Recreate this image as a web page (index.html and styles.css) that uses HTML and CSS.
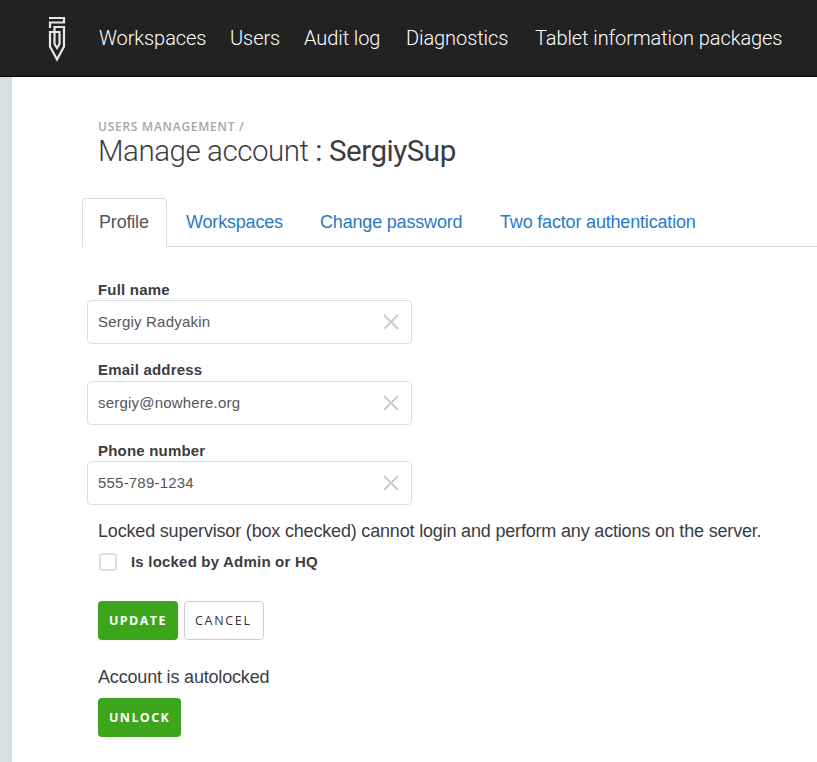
FILE: index.html
```html
<!DOCTYPE html>
<html lang="en">
<head>
<meta charset="utf-8">
<title>Manage account</title>
<link rel="stylesheet" href="styles.css">
</head>
<body>
<header class="navbar">
  <a class="logo" aria-label="Home"><svg width="18" height="46" viewBox="0 0 18 46" fill="none" stroke="#e8e8e8" stroke-width="2.200"><path d="M1 2H16V6.500H2V12M16 11H6.500V28L9 32L11.500 28V16H2V30.500L9 43.500L16 30.500V10"/></svg></a>
  <nav class="menu">
    <a class="m-workspaces">Workspaces</a><a class="m-users">Users</a><a class="m-audit">Audit log</a><a class="m-diag">Diagnostics</a><a class="m-tablet">Tablet information packages</a>
  </nav>
</header>
<main class="page">
  <div class="heading">
    <div class="breadcrumb">USERS MANAGEMENT /</div>
    <h1><span class="title">Manage account</span> <span class="name"><span class="colon">:</span> SergiySup</span></h1>
  </div>
  <div class="tabs">
    <a class="tab active">Profile</a><a class="tab workspaces">Workspaces</a><a class="tab password">Change password</a><a class="tab factor">Two factor authentication</a>
  </div>
  <form class="form">
    <div class="field"><label>Full name</label><div class="input"><span class="v-name">Sergiy Radyakin</span><svg class="clear" viewBox="0 0 16 16"><path d="M1 1L15 15M15 1L1 15"/></svg></div></div>
    <div class="field"><label>Email address</label><div class="input"><span class="v-mail">sergiy@nowhere.org</span><svg class="clear" viewBox="0 0 16 16"><path d="M1 1L15 15M15 1L1 15"/></svg></div></div>
    <div class="field"><label>Phone number</label><div class="input"><span class="v-phone">555-789-1234</span><svg class="clear" viewBox="0 0 16 16"><path d="M1 1L15 15M15 1L1 15"/></svg></div></div>
    <p class="note">Locked supervisor (box checked) cannot login and perform any actions on the server.</p>
    <div class="check"><span class="box"></span><span>Is locked by Admin or HQ</span></div>
    <div class="actions"><a class="btn green update">UPDATE</a><a class="btn cancel">CANCEL</a></div>
    <p class="status">Account is autolocked</p>
    <a class="btn green unlock">UNLOCK</a>
  </form>
</main>
</body>
</html>
```
FILE: styles.css
```css
* { box-sizing: border-box; }
body {
  margin: 0;
  height: 762px;
  overflow: hidden;
  background: #fff;
  color: #3c3c3f;
  font: 18px/24px "Liberation Sans", Arial, sans-serif;
  letter-spacing: -.18px;
}
.navbar {
  height: 77px;
  display: flex;
  background: #222;
  border-bottom: 1px solid #080808;
  color: #fff;
}
.logo { width: 99px; padding: 16px 0 0 48px; }
.logo svg { display: block; }
.menu { display: flex; gap: 24px; padding-top: 26px; font: 300 20px/24px Roboto, sans-serif; letter-spacing: -.08px; white-space: nowrap; }
.m-workspaces { width: 107px; }
.m-users { width: 50px; }
.m-audit { width: 78px; }
.m-diag { width: 105px; }
.page { height: 685px; border-left: 12px solid #dbdfe2; padding-top: 42px; }
.heading { padding-left: 86px; height: 79px; }
.breadcrumb { font: 600 12px/16px "Open Sans", sans-serif; letter-spacing: .75px; color: #a7a7a7; white-space: nowrap; }
h1 { margin: 0; font: 300 29.5px/32px Roboto, sans-serif; letter-spacing: -.45px; white-space: nowrap; }
.name { font-weight: 400; }
.tabs { display: flex; height: 49px; margin-left: 70px; border-bottom: 1px solid #ddd; white-space: nowrap; }
.tab { height: 49px; padding-top: 12px; color: #2a78c8; }
.active { width: 85px; padding: 11px 0 0 16px; color: #555; background: #fff; border: 1px solid #ddd; border-bottom: 0; border-radius: 4px 4px 0 0; }
.workspaces { width: 135px; padding-left: 19px; }
.password { width: 180px; padding-left: 18px; }
.factor { padding-left: 18px; }
.form { padding: 33px 0 0 86px; }
.field { height: 80px; }
.field + .field { height: 81px; }
label { display: block; height: 20px; font-weight: 700; font-size: 15px; line-height: 20px; letter-spacing: .2px; }
.field:nth-child(2) label { height: 21px; }
.input { display: flex; align-items: center; justify-content: space-between; width: 325px; height: 44px; margin-left: -11px; padding: 0 12px 0 10px; border: 1px solid #dbdfe2; border-radius: 4px; font-size: 15px; letter-spacing: .2px; color: #555; }
.clear { width: 16px; height: 16px; stroke: #ccc; stroke-width: 2; fill: none; }
.note { margin: -3px 0 0; white-space: nowrap; }
.check { display: flex; align-items: center; gap: 14px; height: 20px; margin-top: 9px; font-weight: 700; font-size: 15px; letter-spacing: .2px; }
.box { width: 18px; height: 18px; margin-left: 1px; border: 2px solid #ddd; border-radius: 3px; }
.actions { display: flex; gap: 6px; margin-top: 29px; }
.btn { display: block; width: 80px; height: 39px; padding-left: 11px; border-radius: 4px; font: 700 12.5px/39px "Open Sans", sans-serif; letter-spacing: 1.4px; white-space: nowrap; }
.green { background: #3da51b; color: #fff; }
.cancel { padding-left: 10px; line-height: 37px; font-weight: 500; letter-spacing: 1.7px; border: 1px solid #ccc; color: #333; }
.status { margin: 25px 0 9px; }
.unlock { width: 83px; }
```
